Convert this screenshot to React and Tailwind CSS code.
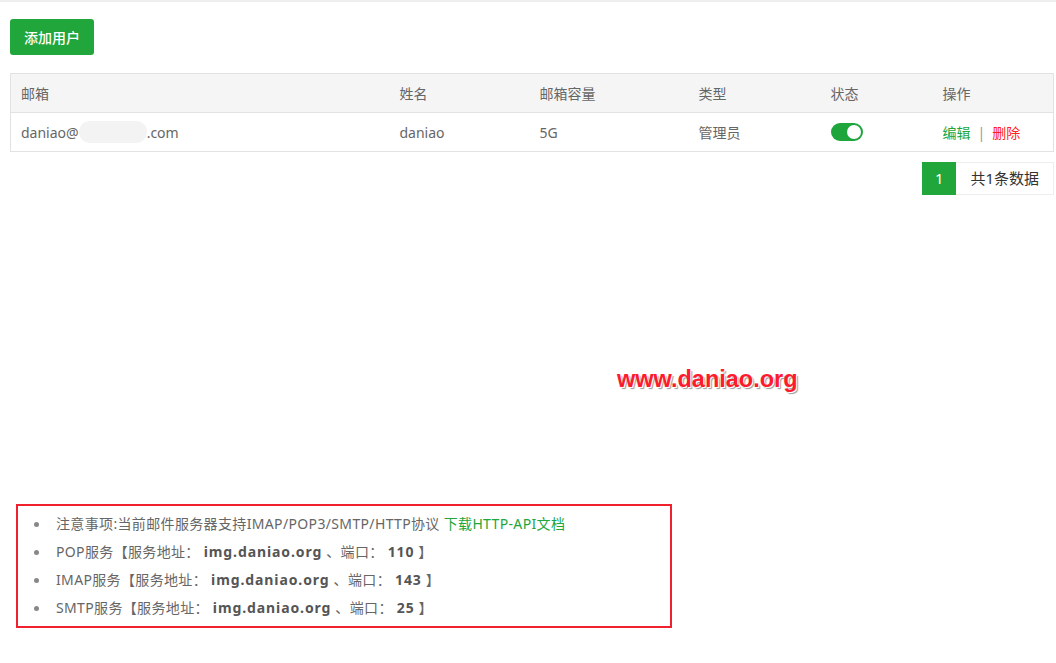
import React, { useState } from 'react';

const users = [
  { email: 'daniao@', domain: '.com', name: 'daniao', quota: '5G', role: '管理员', enabled: true },
];

const services = [
  { label: 'POP服务', host: 'img.daniao.org', port: '110' },
  { label: 'IMAP服务', host: 'img.daniao.org', port: '143' },
  { label: 'SMTP服务', host: 'img.daniao.org', port: '25' },
];

function Toggle({ on, onChange }) {
  return (
    <button
      onClick={onChange}
      className={`relative w-[32px] h-[18px] rounded-full ${on ? 'bg-[#1ea53b]' : 'bg-gray-300'}`}
    >
      <span className={`absolute top-[2px] w-[14px] h-[14px] rounded-full bg-white ${on ? 'right-[2px]' : 'left-[2px]'}`} />
    </button>
  );
}

function Item({ children }) {
  return (
    <li className="flex items-center">
      <span className="w-[5px] h-[5px] rounded-full bg-[#888] ml-[16px] mr-[17px] shrink-0" />
      <span>{children}</span>
    </li>
  );
}

export default function App() {
  const [list, setList] = useState(users);

  return (
    <div className="w-[1056px] h-[663px] bg-white text-[14px] text-[#666] border-t-2 border-[#eeeeee]" style={{ fontFamily: '"Noto Sans", "Noto Sans CJK SC", sans-serif' }}>
      <div className="pl-[10px] pr-[2px] pt-[17px]">
        <button className="h-[36px] w-[84px] rounded-[3px] bg-[#21a63c] text-white text-[14px] font-medium">添加用户</button>

        <table className="w-full table-fixed mt-[18px] border border-[#e2e2e2] border-collapse">
          <thead>
            <tr className="bg-[#f5f5f5] h-[39px] text-left">
              <th className="font-normal pl-[10px] w-[379px]">邮箱</th>
              <th className="font-normal pl-[10px] w-[140px]">姓名</th>
              <th className="font-normal pl-[10px] w-[159px]">邮箱容量</th>
              <th className="font-normal pl-[10px] w-[132px]">类型</th>
              <th className="font-normal pl-[10px] w-[112px]">状态</th>
              <th className="font-normal pl-[10px]">操作</th>
            </tr>
          </thead>
          <tbody>
            {list.map((u, i) => (
              <tr key={i} className="h-[39px] border-t border-[#e2e2e2]">
                <td className="pl-[10px]">
                  <span className="inline-flex items-center">
                    {u.email}
                    <span className="inline-block w-[68px] h-[22px] rounded-full bg-[#f3f3f3]" />
                    {u.domain}
                  </span>
                </td>
                <td className="pl-[10px]">{u.name}</td>
                <td className="pl-[10px]">{u.quota}</td>
                <td className="pl-[10px]">{u.role}</td>
                <td className="pl-[10px] pt-[4px]">
                  <Toggle on={u.enabled} onChange={() => setList(list.map((x, j) => j === i ? { ...x, enabled: !x.enabled } : x))} />
                </td>
                <td className="pl-[10px]">
                  <a className="text-[#21a63c]">编辑</a>
                  <span className="mx-[7px] text-[#999]">|</span>
                  <a className="text-[#ff2020]">删除</a>
                </td>
              </tr>
            ))}
          </tbody>
        </table>

        <div className="flex justify-end mt-[10px]">
          <span className="w-[34px] h-[33px] flex items-center justify-center bg-[#21a63c] text-white text-[15px]">1</span>
          <span className="h-[33px] px-[14px] flex items-center border border-l-0 border-[#eeeeee] text-[#333] text-[15px]">共1条数据</span>
        </div>

        <div className="pl-[607px] mt-[170px] leading-[28px]">
          <span
            className="text-[23.5px] font-bold text-[#ff1a2e]"
            style={{ fontFamily: '"Liberation Sans", Arial, sans-serif', textShadow: '1px 1px 0 #fff, 2px 2px 1px #999' }}
          >
            www.daniao.org
          </span>
        </div>

        <div className="mt-[108px] ml-[6px] w-[656px] border-2 border-[#f0202e] py-[4px]">
          <ul className="text-[14px] text-[#666] leading-[28px] tracking-[0.35px]">
            <Item>注意事项:当前邮件服务器支持IMAP/POP3/SMTP/HTTP协议 <a className="text-[#21a63c]">下载HTTP-API文档</a></Item>
            {services.map(s => (
              <Item key={s.label}>
                {s.label}【服务地址： <b className="text-[#555] tracking-[0.9px]">{s.host}</b> 、端口：<b className="text-[#555] ml-[4px] tracking-[0.9px]">{s.port}</b> 】
              </Item>
            ))}
          </ul>
        </div>
      </div>
    </div>
  );
}
